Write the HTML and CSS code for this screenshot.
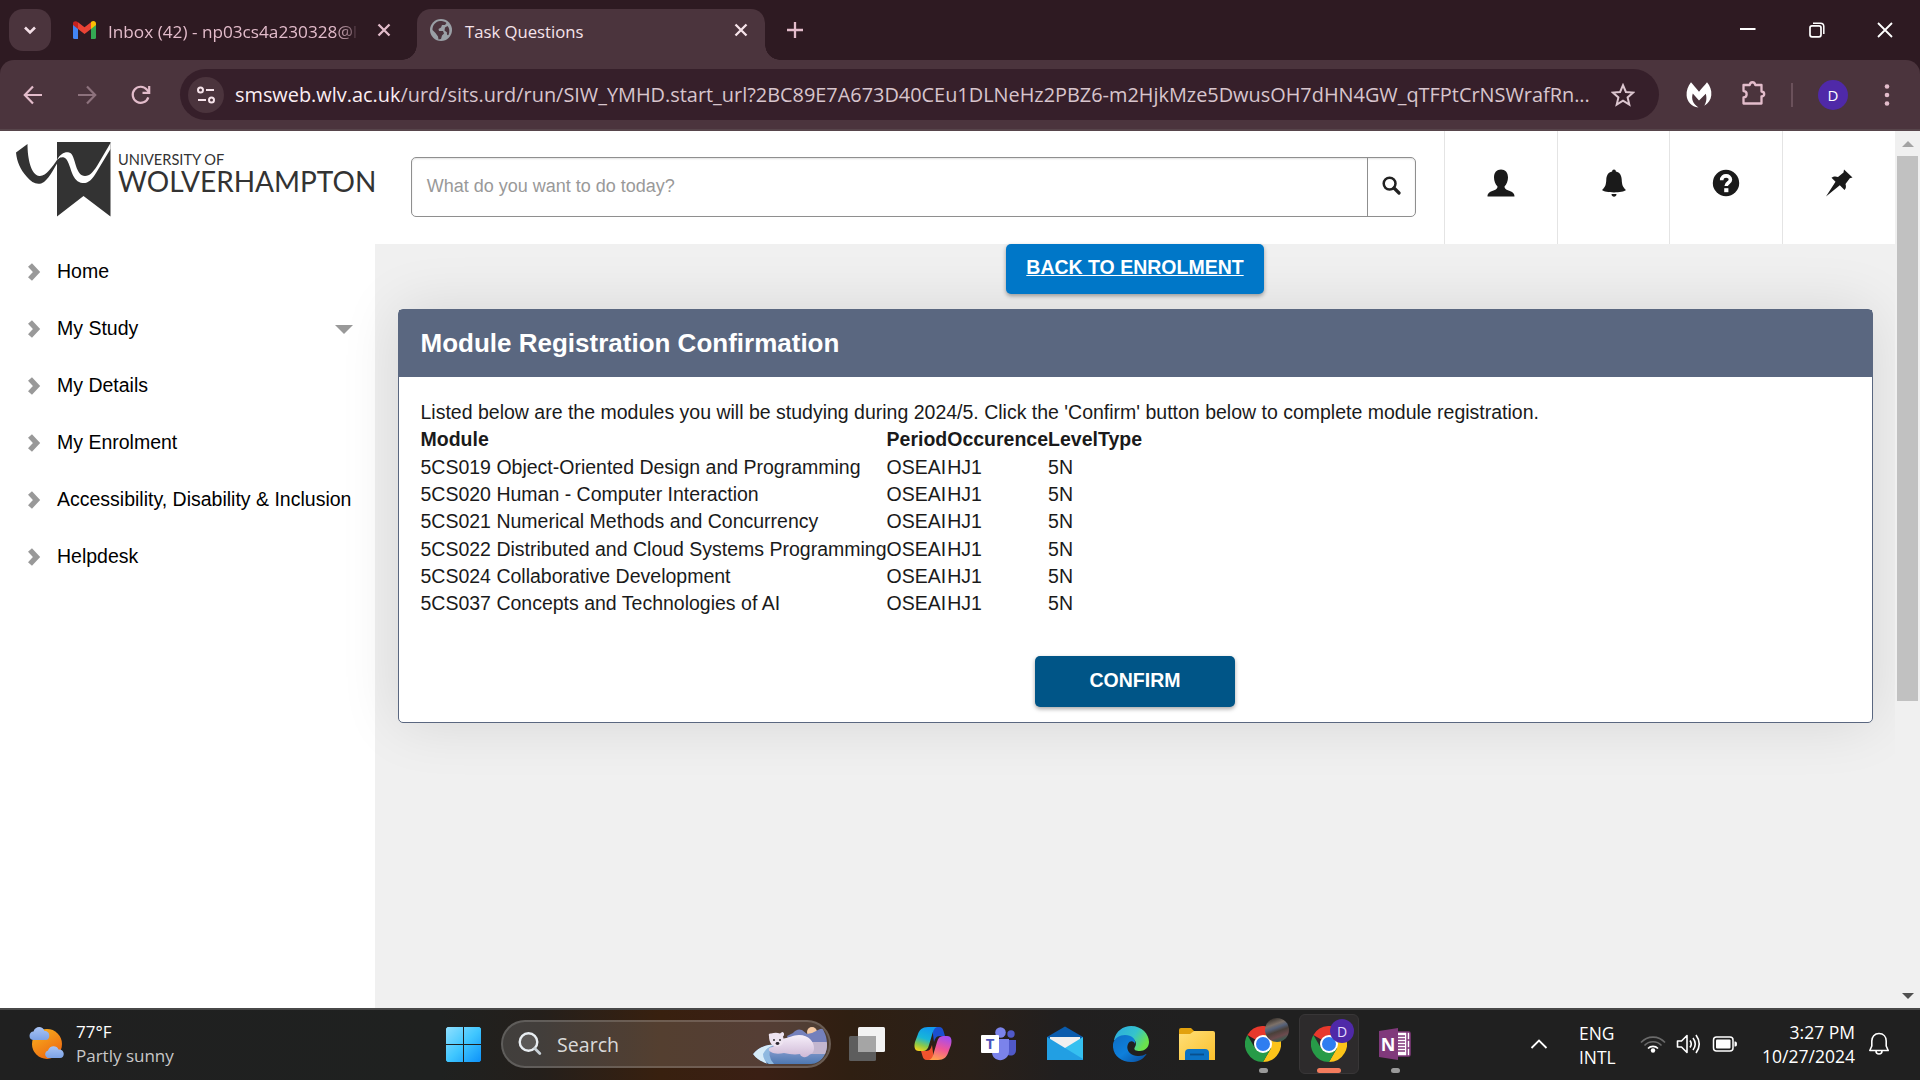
FILE: index.html
```html
<!DOCTYPE html>
<html lang="en">
<head>
<meta charset="utf-8">
<title>Task Questions</title>
<link rel="stylesheet" href="styles.css">
</head>
<body>
<div class="desktop">
  <div class="tabstrip">
    <div class="tab-search"><svg width="42" height="42" viewBox="0 0 42 42"><path d="M16 18.5l5 5 5-5" fill="none" stroke="#f3dfe7" stroke-width="2.6"/></svg></div>
    <div class="tab">
      <svg class="tab-icon" width="23" height="18" viewBox="0 0 23 18"><path d="M0 3v13.500a1.500 1.500 0 0 0 1.500 1.500H5V6z" fill="#4285f4"/><path d="M23 3v13.500a1.500 1.500 0 0 1-1.500 1.500H18V6z" fill="#34a853"/><path d="M18 1.500V8l5-4V2.500C23 0 20-.8 18 1z" fill="#fbbc04"/><path d="M5 8V1.300L11.500 6.300 18 1.300V8l-6.500 5z" fill="#ea4335"/><path d="M0 2.500V4l5 4V1.300C3-.7 0 0 0 2.500z" fill="#c5221f"/></svg>
      <span class="tab-title t-inbox">Inbox (42) - np03cs4a230328@<span class="faded">l</span></span>
      <svg class="tab-close" width="16" height="16" viewBox="0 0 16 16"><path d="M2.500 2.500l11 11M13.500 2.500l-11 11" stroke="#e3bccb" stroke-width="2.300"/></svg>
    </div>
    <div class="tab tab-active">
      <svg class="globe" width="22" height="22" viewBox="0 0 22 22"><circle cx="11" cy="11" r="11" fill="#9aa0a6"/><path d="M10 2c2.500 0 5 .6 6.500 2l-1.500 2h-3l-1 2.500-2.500 1.500.5 2h4l1 2.500-2 2-1 3.500-2.500.5-.5-3-2.500-3.500L2.500 11C2.300 6 6 2.300 10 2z" fill="#4b343d"/><path d="M17.500 7c2 2 2.500 5.500 1 9-1 .5-2-.5-1.500-2.500l-2.500-2 .5-3z" fill="#4b343d"/></svg>
      <span class="tab-title t-task">Task Questions</span>
      <svg class="tab-close" width="16" height="16" viewBox="0 0 16 16"><path d="M2.500 2.500l11 11M13.500 2.500l-11 11" stroke="#f6e3ea" stroke-width="2.300"/></svg>
    </div>
    <svg class="new-tab" width="16" height="16" viewBox="0 0 16 16"><path d="M8 0v16M0 8h16" stroke="#e3bccb" stroke-width="2.300"/></svg>
    <div class="window-controls">
      <svg width="16" height="16" viewBox="0 0 16 16"><path d="M0 7h15.500" stroke="#fff" stroke-width="2"/></svg>
      <svg width="16" height="16" viewBox="0 0 16 16"><rect x="1" y="3.800" width="11" height="11" rx="2" fill="none" stroke="#fff" stroke-width="1.700"/><path d="M4 1.200h7.500a3.300 3.300 0 0 1 3.300 3.300V12" fill="none" stroke="#fff" stroke-width="1.500"/></svg>
      <svg width="16" height="16" viewBox="0 0 16 16"><path d="M1 1l14 14M15 1L1 15" stroke="#fff" stroke-width="1.800"/></svg>
    </div>
  </div>

  <div class="toolbar">
    <div class="nav">
      <svg width="20" height="20" viewBox="0 0 20 20"><path d="M19 10H2M10 1.500L1.800 10l8.200 8.500" fill="none" stroke="#e3bccb" stroke-width="2.200"/></svg>
      <svg width="20" height="20" viewBox="0 0 20 20"><path d="M1 10h17M10 1.500L18.200 10 10 18.500" fill="none" stroke="#8d727d" stroke-width="2.200"/></svg>
      <svg width="20" height="20" viewBox="0 0 20 20"><path d="M17.300 12.300A8 8 0 1 1 16 4.800L18 7.200" fill="none" stroke="#e3bccb" stroke-width="2.200"/><path d="M18.200 1v6.800h-6.700" fill="none" stroke="#e3bccb" stroke-width="2.200"/></svg>
    </div>
    <div class="omnibox">
      <div class="site-info"><svg width="20" height="20" viewBox="0 0 20 20" fill="none" stroke="#f6e3ea" stroke-width="2"><circle cx="4.500" cy="5" r="2.500"/><path d="M10 5h8M2 15h8"/><circle cx="15.500" cy="15" r="2.500"/></svg></div>
      <span class="url"><b>smsweb.wlv.ac.uk</b>/urd/sits.urd/run/SIW_YMHD.start_url?2BC89E7A673D40CEu1DLNeHz2PBZ6-m2HjkMze5DwusOH7dHN4GW_qTFPtCrNSWrafRn...</span>
      <svg class="star" width="24" height="24" viewBox="0 0 24 24"><path d="M12 2.200l2.900 6.800 7.300.6-5.600 4.800 1.700 7.200-6.300-3.900-6.300 3.900 1.700-7.200-5.600-4.800 7.300-.6z" fill="none" stroke="#dcc6cf" stroke-width="2"/></svg>
    </div>
    <div class="extensions">
      <svg width="26" height="26" viewBox="0 -1 26 26"><path d="M5 -.8c2 2.500 5.500 6.500 8 9.500C15.500 5.500 19 2 21 -.8c3 3.500 4.800 8 4.300 13-.4 4.500-3 8-7 10.500 1.500-2.500 3-6.500 1.500-12L13 17.500 6.800 10.500C5 16 7 21 12.500 24.500 5.500 24 1 18.500.6 12.500.2 7.500 2 3 5-.8z" fill="#fff"/></svg>
      <svg width="26" height="26" viewBox="0 0 26 26"><path d="M2.500 5h6.300c.3-3.700 5-3.700 5.400 0H20.500v6.500c3.600.4 3.600 4.600 0 5V23.500h-18v-6c4.200-.3 4.200-6.200 0-6.500z" fill="none" stroke="#e3bccb" stroke-width="2.300" stroke-linejoin="round"/></svg>
      <span class="bar-divider"></span>
      <span class="avatar">D</span>
      <svg width="6" height="24" viewBox="0 0 6 24" fill="#e3bccb"><circle cx="3" cy="3.500" r="2.300"/><circle cx="3" cy="12" r="2.300"/><circle cx="3" cy="20.500" r="2.300"/></svg>
    </div>
  </div>

  <div class="page">
    <div class="site">
      <header class="site-header">
        <div class="logo">
          <svg width="100" height="77" viewBox="0 0 100 77"><path d="M45 2h53.500v74.500L71.500 56 45 76.500z" fill="#333"/><path d="M45 20C48 14 53 11.500 57 12.500c4 1 5 7 7 13.500 2 6 4.500 10 9 10 5 0 8-4 12-10L98.500 3v6L84 33c-4 7-8 10.500-13.500 10-5-.5-8-4-10.500-10-2.500-7-4-14-8-15.500-3-1-5 1-7 3z" fill="#fff"/><path d="M4 12.500L15.500 4c0 15 3.500 31 12 32C34 36.500 40 27 45 20l4-3C43 26 38.500 37 32 42c-6 4-12 1-17-5C8 29 5 22 4 12.500z" fill="#333"/></svg>
          <div class="logo-text"><span class="logo-small">UNIVERSITY OF</span><span class="logo-big">WOLVERHAMPTON</span></div>
        </div>
        <div class="search-box">
          <div class="search-input">What do you want to do today?</div>
          <div class="search-button"><svg width="19" height="19" viewBox="0 0 19 19"><circle cx="7.600" cy="7.600" r="5.900" fill="none" stroke="#222" stroke-width="2.500"/><path d="M12 12l5 5" stroke="#222" stroke-width="3.200" stroke-linecap="round"/></svg></div>
        </div>
        <nav class="tools">
          <div><svg width="28" height="28" viewBox="0 0 28 28"><path d="M14 .5c4.200 0 7 2.800 7 8 0 3.500-1.400 7-3.500 9 0 2 1 2.800 4 4 3.700 1.400 6 2.600 6 6H.5c0-3.400 2.300-4.600 6-6 3-1.200 4-2 4-4C8.400 15.500 7 12 7 8.500c0-5.200 2.800-8 7-8z" fill="#1a1a1a"/></svg></div>
          <div><svg width="28" height="28" viewBox="0 0 28 28"><path d="M14 .5c1.200 0 1.800.8 1.900 2 4 .9 5.600 4 5.800 8 .3 5.500 1 7.500 4.300 10.500-3 3.200-21 3.200-24 0 3.300-3 4-5 4.300-10.500.2-4 1.800-7.100 5.800-8C12.200 1.300 12.800.5 14 .5z" fill="#1a1a1a"/><path d="M11.500 25h5c0 3.500-5 3.500-5 0z" fill="#1a1a1a"/></svg></div>
          <div><svg width="28" height="28" viewBox="0 0 28 28"><circle cx="14" cy="14" r="13.200" fill="#1a1a1a"/><path d="M9.700 11.200c0-6 8.800-5.400 8.700-.5 0 3.200-4.200 3-4.200 6.300" fill="none" stroke="#fff" stroke-width="3.600"/><path d="M12.200 19.200h4.200v4h-4.200z" fill="#fff"/></svg></div>
          <div><svg width="28" height="28" viewBox="0 0 28 28"><path d="M19 .5l8.500 8-2.700.8L20.500 15c.8 2.500.5 4.500-1 6l-4.700-4.700L1 27.500l9.500-14.800L6.500 8.800c2-1.600 4.300-1.600 6.500-.8L18.500 3.500z" fill="#1a1a1a"/></svg></div>
        </nav>
      </header>
      <div class="body">
        <ul class="side-menu">
          <li><svg class="chev" width="14" height="20" viewBox="0 0 14 20"><path d="M3 3l6.500 7L3 17" fill="none" stroke="#999" stroke-width="5.400"/></svg>Home</li>
          <li><svg class="chev" width="14" height="20" viewBox="0 0 14 20"><path d="M3 3l6.500 7L3 17" fill="none" stroke="#999" stroke-width="5.400"/></svg>My Study<span class="caret"></span></li>
          <li><svg class="chev" width="14" height="20" viewBox="0 0 14 20"><path d="M3 3l6.500 7L3 17" fill="none" stroke="#999" stroke-width="5.400"/></svg>My Details</li>
          <li><svg class="chev" width="14" height="20" viewBox="0 0 14 20"><path d="M3 3l6.500 7L3 17" fill="none" stroke="#999" stroke-width="5.400"/></svg>My Enrolment</li>
          <li><svg class="chev" width="14" height="20" viewBox="0 0 14 20"><path d="M3 3l6.500 7L3 17" fill="none" stroke="#999" stroke-width="5.400"/></svg>Accessibility, Disability &amp; Inclusion</li>
          <li><svg class="chev" width="14" height="20" viewBox="0 0 14 20"><path d="M3 3l6.500 7L3 17" fill="none" stroke="#999" stroke-width="5.400"/></svg>Helpdesk</li>
        </ul>
        <main class="content">
          <a class="back-button">BACK TO ENROLMENT</a>
          <section class="card">
            <h1>Module Registration Confirmation</h1>
            <div class="card-body">
              <p>Listed below are the modules you will be studying during 2024/5. Click the 'Confirm' button below to complete module registration.</p>
              <table>
                <tr><th>Module</th><th>Period</th><th>Occurence</th><th>Level</th><th>Type</th></tr>
                <tr><td>5CS019 Object-Oriented Design and Programming</td><td>OSEAI</td><td>HJ1</td><td colspan="2">5N</td></tr>
                <tr><td>5CS020 Human - Computer Interaction</td><td>OSEAI</td><td>HJ1</td><td colspan="2">5N</td></tr>
                <tr><td>5CS021 Numerical Methods and Concurrency</td><td>OSEAI</td><td>HJ1</td><td colspan="2">5N</td></tr>
                <tr><td>5CS022 Distributed and Cloud Systems Programming</td><td>OSEAI</td><td>HJ1</td><td colspan="2">5N</td></tr>
                <tr><td>5CS024 Collaborative Development</td><td>OSEAI</td><td>HJ1</td><td colspan="2">5N</td></tr>
                <tr><td>5CS037 Concepts and Technologies of AI</td><td>OSEAI</td><td>HJ1</td><td colspan="2">5N</td></tr>
              </table>
              <div class="confirm">CONFIRM</div>
            </div>
          </section>
        </main>
      </div>
    </div>
    <div class="scrollbar"><span class="arrow-up"></span><span class="thumb"></span><span class="arrow-down"></span></div>
  </div>

  <footer class="taskbar">
    <div class="weather">
      <svg width="38" height="36" viewBox="0 0 38 36"><defs><linearGradient id="sun" x1="0" y1="0" x2=".6" y2="1"><stop offset="0" stop-color="#f9b51f"/><stop offset="1" stop-color="#ee6a11"/></linearGradient><linearGradient id="cl" x1="0" y1="0" x2="0" y2="1"><stop offset="0" stop-color="#a9c4f5"/><stop offset="1" stop-color="#7ca2e6"/></linearGradient></defs><circle cx="19" cy="18" r="15" fill="url(#sun)"/><path d="M5 14a4.300 4.300 0 0 1 .5-8.500C7-.5 15-.5 16.500 5c6-.5 6.500 9 1 9z" fill="url(#cl)"/><path d="M19.500 32a4 4 0 0 1 .5-7.500c1.500-5.500 9-5.500 10.500-1 6.500-.5 7 8.500 1.500 8.500z" fill="url(#cl)"/></svg>
      <div class="two-lines"><span>77°F</span><span class="muted t-partly">Partly sunny</span></div>
    </div>
    <div class="start"><svg width="36" height="36" viewBox="0 0 36 36"><defs><linearGradient id="win" gradientUnits="userSpaceOnUse" x1="0" y1="0" x2="36" y2="36"><stop offset="0" stop-color="#8fe0ff"/><stop offset=".5" stop-color="#3fc6ff"/><stop offset="1" stop-color="#0a8ef8"/></linearGradient></defs><path d="M1.500 0H17v17H0V1.500zM18 0h15.500L35 1.500V17H18zM0 18h17v17H1.500L0 33.500zM18 18h17v15.500L33.500 35H18z" fill="url(#win)"/></svg></div>
    <div class="search-pill">
      <svg class="lens" width="24" height="24" viewBox="0 0 24 24"><circle cx="10.500" cy="10" r="8.800" fill="#5b5856" stroke="#e9eef2" stroke-width="2.400"/><path d="M16.800 16.500l5 5" stroke="#c8d0d6" stroke-width="2.800" stroke-linecap="round"/></svg>
      <span class="t-search">Search</span>
      <svg class="bear" width="75" height="38" viewBox="0 0 75 38">
        <defs>
          <clipPath id="pill"><path d="M0 27C6 19 16 17 26 17L36 0H68C76 9 77 28 65 35Q62 37 58 37H16Q5 34 0 27z"/></clipPath>
          <linearGradient id="sea" x1="0" y1="0" x2="0" y2="1"><stop offset="0" stop-color="#9da9d8"/><stop offset="1" stop-color="#4a76b0"/></linearGradient>
          <linearGradient id="fur" x1="0" y1="0" x2="0" y2="1"><stop offset="0" stop-color="#f6effa"/><stop offset="1" stop-color="#cfb9d6"/></linearGradient>
        </defs>
        <g clip-path="url(#pill)">
          <path d="M0 16h75v22H0z" fill="url(#sea)"/>
          <path d="M52 15h23v12H56z" fill="#c3b6cf"/>
          <circle cx="59" cy="5" r="5" fill="#f5c9a3"/>
          <path d="M34 9l6-3q4-5 9-3l5 4 5-1 6-3q5-3 10 1v11H36z" fill="#7480bc"/>
          <path d="M0 27Q8 17 24 17 6 22 14 37H8Q0 34 0 27z" fill="#d6ebf8"/>
          <path d="M10 27q3-6 9-8-6 9 2 18h-5q-6-4-6-10z" fill="#8fb9e0"/>
        </g>
        <path d="M28 12c8-1 12-4 18-4 10 0 15 7 15 13 0 4-2 6-5 7-2 3-8 3-9-1-6 1-11 0-16-1-5 1-10 1-13-1-4-2-2-5 2-5z" fill="url(#fur)"/>
        <path d="M16 9q-1-3 2-2.500 5-1.500 9 0 3-3 4 0 .5 2-1 3c2 6-1 10-6 10s-8-4-8-10.500z" fill="#eee4f1"/>
        <circle cx="21" cy="13" r="1" fill="#333"/><circle cx="27" cy="13" r="1" fill="#333"/><ellipse cx="24.500" cy="16.500" rx="1.900" ry="1.400" fill="#2c2730"/>
      </svg>
    </div>
    <div class="apps">
      <div class="app"><svg width="36" height="36" viewBox="0 0 36 36"><rect x="0" y="10" width="27" height="25" rx="1.500" fill="#5d5d5d"/><rect x="9" y="1" width="27" height="25" rx="1.500" fill="#f2f2f2"/><rect x="9" y="10" width="18" height="16" fill="#a5a5a5"/></svg></div>
      <div class="app"><svg width="38" height="36" viewBox="0 0 38 36"><defs><linearGradient id="c1" x1=".5" y1="0" x2=".2" y2="1"><stop offset="0" stop-color="#1199ee"/><stop offset=".45" stop-color="#18b6d8"/><stop offset=".75" stop-color="#8ac94a"/><stop offset="1" stop-color="#f5d31c"/></linearGradient><linearGradient id="c2" x1=".6" y1="0" x2=".3" y2="1"><stop offset="0" stop-color="#a54df0"/><stop offset=".5" stop-color="#ef5598"/><stop offset="1" stop-color="#ffa04d"/></linearGradient></defs><path d="M18 1h7c3 0 4 2 4.500 4l1.500 5h-5c-4 0-5 3-6 6z" fill="#1b4fd0"/><path d="M20 34h-7c-3 0-4-2-4.500-4L7 25h5c4 0 5-3 6-6z" fill="#f0532e"/><path d="M14 1h9c-3 1-4 4-5 8l-3 10c-1 4-3 6-6 6H5c-5 0-5-5-4-9L4 8c1.500-4 4-7 10-7z" fill="url(#c1)"/><path d="M24 34h-9c3-1 4-4 5-8l3-10c1-4 3-6 6-6h4c5 0 5 5 4 9l-3 8c-1.500 4-4 7-10 7z" fill="url(#c2)"/></svg></div>
      <div class="app"><svg width="36" height="36" viewBox="0 0 36 36"><circle cx="30" cy="8" r="3.700" fill="#5059c9"/><circle cx="19.500" cy="6.500" r="5.300" fill="#7b83eb"/><path d="M25 14h10v10c0 4-3 6-6 5.500-2 0-4-1-4-3z" fill="#5059c9"/><path d="M10 13h18v12c0 12-17 12-17 1z" fill="#7b83eb"/><rect y="9" width="18" height="18" rx="1" fill="#fff"/><text x="9" y="23" text-anchor="middle" class="icon-letter" font-size="15" fill="#4b53bc">T</text></svg></div>
      <div class="app"><svg width="36" height="36" viewBox="0 0 36 36"><path d="M0 11L18 .5 36 11v5L18 26 0 16z" fill="#0a5cad"/><path d="M3 11h30v5L18 28 3 16z" fill="#f0f0f0"/><path d="M36 11L18 22 0 33v1h36z" fill="#35c0f0"/><path d="M0 11l36 22v1H0z" fill="#229fe3"/></svg></div>
      <div class="app"><svg width="36" height="36" viewBox="0 0 36 36"><defs><linearGradient id="e1" x1="0" y1="0" x2="1" y2=".5"><stop offset="0" stop-color="#2aa8e0"/><stop offset=".6" stop-color="#35c3cd"/><stop offset="1" stop-color="#6be24c"/></linearGradient><linearGradient id="e2" x1="0" y1="0" x2="1" y2="1"><stop offset="0" stop-color="#0e6dc4"/><stop offset=".5" stop-color="#0e80dc"/><stop offset="1" stop-color="#0a4a9a"/></linearGradient></defs><path d="M1 14C3 5 10 0 18 0c11 0 18 8 18 16 0 6-5 9-9 9-4 0-7-1-5-4 3-5-1-9-6-9-7 0-13 3-15 2z" fill="url(#e1)"/><path d="M0 18C1 12 7 9 12 9c8 0 11 5 10 9-1-3-5-4-7 0-3 7 4 13 11 12 3 0 5-1 7-2 1 0 0 1-1 2-3 4-8 6-14 6C8 36-1 29 0 18z" fill="url(#e2)"/></svg></div>
      <div class="app"><svg width="36" height="36" viewBox="0 0 36 36"><defs><linearGradient id="fo" x1="0" y1="0" x2="1" y2="1"><stop offset="0" stop-color="#ffdf78"/><stop offset="1" stop-color="#fbc02c"/></linearGradient></defs><path d="M0 4q0-2 2-2h10l3 3v6H0z" fill="#e2a10d"/><path d="M0 8h11l4-3h19q2 0 2 2v27H0z" fill="url(#fo)"/><path d="M6 34v-7q0-4 4-4h16q4 0 4 4v7z" fill="#0b72c4"/><path d="M11 28.500h14" stroke="#094f8c" stroke-width="1.800"/></svg></div>
      <div class="app"><svg width="36" height="36" viewBox="0 0 36 36"><path d="M18 18L2.400 9A18 18 0 0 1 33.600 9H18z" fill="#e8382c"/><path d="M18 9H33.600A18 18 0 0 1 18 36l7.800-13.500z" fill="#fcc419"/><path d="M18 18l7.800 4.500L18 36A18 18 0 0 1 2.400 9l7.800 13.500z" fill="#279b48"/><circle cx="18" cy="18" r="9" fill="#fff"/><circle cx="18" cy="18" r="7" fill="#2f7df0"/></svg><i class="badge photo"></i><i class="dot"></i></div>
      <div class="app active"><svg width="36" height="36" viewBox="0 0 36 36"><path d="M18 18L2.400 9A18 18 0 0 1 33.600 9H18z" fill="#e8382c"/><path d="M18 9H33.600A18 18 0 0 1 18 36l7.800-13.500z" fill="#fcc419"/><path d="M18 18l7.800 4.500L18 36A18 18 0 0 1 2.400 9l7.800 13.500z" fill="#279b48"/><circle cx="18" cy="18" r="9" fill="#fff"/><circle cx="18" cy="18" r="7" fill="#2f7df0"/></svg><i class="badge">D</i><i class="dot wide"></i></div>
      <div class="app"><svg width="34" height="36" viewBox="0 0 34 36"><rect x="17" y="6" width="15" height="24" rx="1.500" fill="#fff" stroke="#80397b" stroke-width="1.600"/><path d="M20 10h7M20 13h7M20 16h7M20 19h7M20 22h7M20 25h7" stroke="#80397b" stroke-width="1.300"/><path d="M29 6v24M29 14h3M29 22h3" stroke="#80397b" stroke-width="1.500"/><path d="M1 5l19-3v32L1 31z" fill="#80397b"/><text x="10" y="24.500" text-anchor="middle" class="icon-letter" font-size="18" fill="#fff">N</text></svg><i class="dot"></i></div>
    </div>
    <div class="tray">
      <svg class="up" width="18" height="12" viewBox="0 0 18 12"><path d="M1.500 10L9 2.500l7.500 7.500" fill="none" stroke="#fff" stroke-width="1.800"/></svg>
      <div class="two-lines lang"><span class="t-eng">ENG</span><span class="t-intl">INTL</span></div>
      <svg class="wifi" width="26" height="20" viewBox="0 0 26 20" fill="none" stroke-width="1.600"><path d="M1 8.500a16 16 0 0 1 24 0M4.500 11.500a11.500 11.500 0 0 1 17 0" stroke="#6a6a6a"/><path d="M8 14.500a7 7 0 0 1 10 0" stroke="#fff"/><circle cx="13" cy="16.500" r="2.200" fill="#fff"/></svg>
      <svg class="speaker" width="26" height="22" viewBox="0 0 26 22" fill="none" stroke="#fff" stroke-width="1.600"><path d="M1.500 8h4l5.500-5.500v17L5.500 14h-4z" stroke-linejoin="round"/><path d="M14 7.500q2.500 3.500 0 7M17 5q4.500 6 0 12M20 2q6.500 9 0 18"/></svg>
      <svg class="battery" width="26" height="18" viewBox="0 0 26 18"><rect x="1.500" y="2" width="19.500" height="14" rx="3" fill="none" stroke="#fff" stroke-width="1.500"/><rect x="4" y="4.500" width="14.500" height="9" rx="1" fill="#fff"/><path d="M22.500 6.500h1q1.500 0 1.500 2.500t-1.500 2.500h-1z" fill="#fff"/></svg>
      <div class="two-lines clock"><span class="t-time">3:27 PM</span><span class="t-date">10/27/2024</span></div>
      <svg class="bell" width="22" height="24" viewBox="0 0 22 24"><path d="M11 1.500c4.500 0 7.200 3.300 7.200 7.500v5l2 4.500H1.800l2-4.500V9c0-4.200 2.700-7.500 7.200-7.500zM8 19c0 4 6 4 6 0" fill="none" stroke="#fff" stroke-width="1.600" stroke-linejoin="round"/></svg>
    </div>
  </footer>
</div>
</body>
</html>
```
FILE: styles.css
```css
* { box-sizing: border-box; }
body { margin: 0; font-family: "Liberation Sans", Arial, sans-serif; }
svg { display: block; flex: none; }
.desktop { width: 1920px; height: 1080px; overflow: hidden; display: flex; flex-direction: column; background: #2e1a22; }

.tabstrip, .toolbar, .taskbar { font-family: "Open Sans", "Noto Sans", sans-serif; white-space: nowrap; }
.tabstrip { height: 60px; flex: none; display: flex; padding: 9px 0 0 9px; }
.tab-search { width: 42px; height: 42px; border-radius: 14px; background: #4b343d; }
.tab { width: 366px; height: 42px; display: flex; align-items: center; padding-left: 22px; position: relative; }
.tab-title { color: #e3bccb; font-size: 17.200px; line-height: 24px; padding-top: 3px; flex: none; }
.t-inbox { width: 256px; margin-left: 12px; -webkit-mask-image: linear-gradient(90deg, #000 88%, rgba(0,0,0,.35) 97%); mask-image: linear-gradient(90deg, #000 88%, rgba(0,0,0,.35) 97%); }
.faded { opacity: .5; }
.tab-icon { margin-top: -1px; }
.tab .tab-close { margin-left: 12px; }
.tab-active { width: 348px; height: 51px; background: #4b343d; border-radius: 14px 14px 0 0; padding: 0 0 9px 13px; }
.tab-active::before, .tab-active::after { content: ""; position: absolute; bottom: 0; width: 15px; height: 15px; }
.tab-active::before { left: -15px; background: radial-gradient(circle at 0 0, transparent 14.500px, #4b343d 15px); }
.tab-active::after { right: -15px; background: radial-gradient(circle at 100% 0, transparent 14.500px, #4b343d 15px); }
.t-task { color: #f6e3ea; width: 252px; margin-left: 13px; font-size: 16.700px; }
.tab-active .tab-close { margin-left: 16px; }
.new-tab { margin: 13px 0 0 22px; }
.window-controls { margin: 13px 27px 0 auto; display: flex; gap: 52.500px; }

.toolbar { height: 71px; flex: none; display: flex; align-items: center; background: #4b343d; border-radius: 14px 14px 0 0; border-bottom: 2px solid #57454b; }
.nav { display: flex; gap: 34px; padding-left: 23px; width: 180px; }
.omnibox { width: 1479px; height: 51px; border-radius: 26px; background: #361f2a; display: flex; align-items: center; padding-left: 8px; }
.site-info { width: 36px; height: 36px; border-radius: 50%; background: #4b343d; display: flex; align-items: center; justify-content: center; }
.url { width: 1356px; margin-left: 11px; font-size: 19.900px; color: #d8c5cd; }
.url b { font-weight: 400; color: #fbeef3; }
.star { margin-left: 20px; }
.extensions { display: flex; align-items: center; padding-left: 27px; }
.extensions svg:nth-child(2) { margin: -3px 0 0 29px; }
.bar-divider { width: 2px; height: 24px; background: #6b515b; margin-left: 24px; }
.avatar { width: 30px; height: 30px; border-radius: 50%; background: #4f29a8; color: #fff; font-size: 15px; line-height: 30px; text-align: center; margin: 0 36px 0 25px; }

.page { height: 877px; flex: none; display: flex; background: #fff; }
.site { width: 1895px; display: flex; flex-direction: column; overflow: hidden; }
.site-header { height: 113px; flex: none; display: flex; background: #fff; position: relative; z-index: 1; }
.logo { width: 411px; display: flex; padding: 9px 0 0 12px; }
.logo-text { font-family: "Lato", sans-serif; color: #333; display: flex; flex-direction: column; padding: 12px 0 0 6px; white-space: nowrap; }
.logo-small { font-size: 14.600px; line-height: 16px; }
.logo-big { font-size: 28px; line-height: 26px; }
.search-box { width: 1006px; height: 60px; margin-top: 26px; border: 1px solid #8f8f8f; border-radius: 5px; display: flex; box-shadow: inset 0 1px 2px rgba(0,0,0,.12); }
.search-input { width: 956px; padding-left: 15px; line-height: 57px; font-size: 18px; color: #999; border-right: 1px solid #8f8f8f; }
.search-button { flex: 1; display: flex; align-items: center; justify-content: center; padding-bottom: 3px; }
.tools { margin-left: 28px; display: flex; }
.tools div { width: 112.800px; border-left: 1px solid #e4e4e4; display: flex; justify-content: center; padding-top: 38px; }

.body { flex: 1; display: flex; }
.side-menu { width: 375px; margin: 0; padding: 0; list-style: none; background: #fff; font-size: 19.500px; color: #000; }
.side-menu li { height: 57px; display: flex; align-items: center; padding: 0 22px 2px 27px; white-space: nowrap; }
.chev { margin: 0 16px 0 0; }
.caret { margin: 2px 0 0 auto; border: 9px solid transparent; border-top-color: #999; border-bottom: 0; }
.content { flex: 1; background: #f0f0f0; display: flex; flex-direction: column; align-items: center; }
.back-button { width: 258px; height: 50px; border-radius: 5px; background: #0077c8; color: #fff; font-weight: 700; font-size: 19.500px; line-height: 47px; text-align: center; text-decoration: underline; box-shadow: 0 2px 4px rgba(0,0,0,.35); position: relative; z-index: 1; }
.card { width: 1475px; height: 414px; margin-top: 15px; background: #fff; border: 1px solid #5a6780; border-radius: 5px; box-shadow: 0 0 60px rgba(0,0,0,.11); color: #1a1a1a; font-size: 19.500px; line-height: 27.333px; }
.card h1 { margin: 0; height: 67px; padding-left: 22px; background: #5a6780; color: #fff; font-size: 26px; line-height: 67px; }
.card-body { padding: 22px 22px 0; }
.card p { margin: 0; }
table { border-collapse: collapse; }
td, th { padding: 0; text-align: left; white-space: nowrap; }
.confirm { width: 200px; height: 51px; margin: 38px auto 0; border-radius: 5px; background: #005587; color: #fff; font-weight: 700; text-align: center; line-height: 49px; box-shadow: 0 2px 4px rgba(0,0,0,.35); }

.scrollbar { width: 25px; background: #f0f0f0; display: flex; flex-direction: column; align-items: center; padding: 10px 0 9px; }
.arrow-up { border: 6px solid transparent; border-bottom-color: #a3a3a3; border-top: 0; }
.thumb { width: 21px; height: 545px; margin-top: 9px; background: #c1c1c1; }
.arrow-down { margin-top: auto; border: 6px solid transparent; border-top-color: #505050; border-bottom: 0; }

.taskbar { flex: 1; border-top: 2px solid #484848; display: flex; align-items: center; color: #fff; background: linear-gradient(90deg, #202020 0, #1f2120 440px, #241f1b 540px, #38200f 660px, #3a1f14 760px, #2f1f12 850px, #2a2019 970px, #211f1f 1060px, #202020 1200px); }
.weather { display: flex; width: 446px; padding: 0 0 2px 28px; align-items: center; }
.two-lines { display: flex; flex-direction: column; font-size: 17px; line-height: 24px; }
.weather .two-lines { margin-left: 10px; }
.muted { color: #c8c8c8; }
.start { width: 55px; padding-bottom: 1px; }
.search-pill { width: 330px; height: 48px; margin-top: -2px; border-radius: 24px; border: 2px solid rgba(255,255,255,.16); background: rgba(255,255,255,.14); display: flex; align-items: center; padding-left: 15px; color: #dadada; font-size: 19.600px; }
.t-search { margin-left: 15px; width: 196px; }
.search-pill .bear { margin-top: 3px; }
.apps { display: flex; gap: 6px; margin-left: 6px; }
.app { width: 60px; height: 60px; display: flex; align-items: center; justify-content: center; position: relative; margin-top: -2px; border-radius: 6px; }
.active { background: #2d2b2c; border: 1px solid #383637; }
.badge { position: absolute; right: 4px; top: 4px; width: 24px; height: 24px; border-radius: 50%; background: #4f29a8; color: #e6dcff; font: 14px/25px "Open Sans", sans-serif; text-align: center; }
.photo { background: linear-gradient(160deg, #3a342f 10%, #7d7168 30%, #54617a 42%, #4a403a 55%, #6b4a4d 72%, #3e5a50 85%, #5b4548 100%); }
.dot { position: absolute; bottom: 1px; left: 25.500px; width: 9px; height: 5px; border-radius: 3px; background: #9a9a9a; }
.wide { left: 17px; width: 24px; background: #f47c5d; bottom: 0; }
.icon-letter { font-family: "Open Sans", sans-serif; font-weight: 700; }
.tray { margin-left: auto; display: flex; align-items: center; padding: 0 30px 2px 0; }
.lang { margin: 2px 0 0 31px; width: 61px; font-size: 17.400px; }
.speaker { margin-left: 10px; }
.battery { margin-left: 10px; }
.clock { width: 117px; align-items: flex-end; font-size: 17.500px; }
.bell { margin-left: 13px; }
```
